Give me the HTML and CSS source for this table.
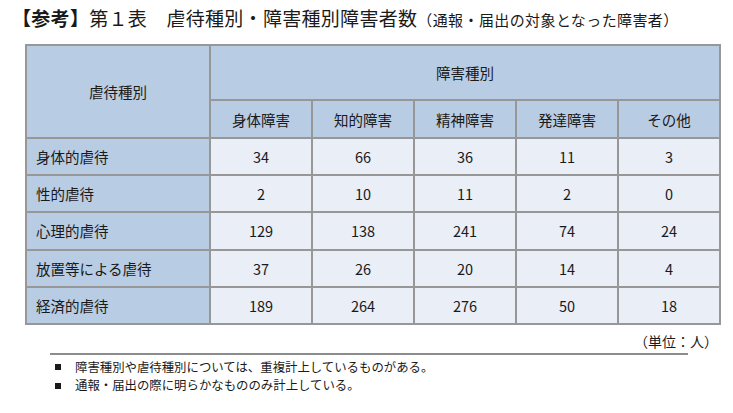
FILE: index.html
```html
<!DOCTYPE html>
<html lang="ja">
<head>
<meta charset="utf-8">
<link rel="stylesheet" href="styles.css">
</head>
<body>
<h1 class="title"><span class="ref">【参考】</span>第１表　虐待種別・障害種別障害者数<span class="sub">（通報・届出の対象となった障害者）</span></h1>
<table class="data">
  <colgroup>
    <col class="c-label">
    <col class="c-num"><col class="c-num"><col class="c-num"><col class="c-num"><col class="c-num">
  </colgroup>
  <thead>
    <tr class="h1">
      <th rowspan="2">虐待種別</th>
      <th colspan="5">障害種別</th>
    </tr>
    <tr class="h2">
      <th>身体障害</th><th>知的障害</th><th>精神障害</th><th>発達障害</th><th>その他</th>
    </tr>
  </thead>
  <tbody>
    <tr><th>身体的虐待</th><td>34</td><td>66</td><td>36</td><td>11</td><td>3</td></tr>
    <tr><th>性的虐待</th><td>2</td><td>10</td><td>11</td><td>2</td><td>0</td></tr>
    <tr><th>心理的虐待</th><td>129</td><td>138</td><td>241</td><td>74</td><td>24</td></tr>
    <tr><th>放置等による虐待</th><td>37</td><td>26</td><td>20</td><td>14</td><td>4</td></tr>
    <tr><th>経済的虐待</th><td>189</td><td>264</td><td>276</td><td>50</td><td>18</td></tr>
  </tbody>
</table>
<div class="unit">（単位：人）</div>
<div class="rule"></div>
<ul class="notes">
  <li>障害種別や虐待種別については、重複計上しているものがある。</li>
  <li>通報・届出の際に明らかなもののみ計上している。</li>
</ul>
</body>
</html>
```

FILE: styles.css
```css
html, body {
  margin: 0;
  padding: 0;
  background: #ffffff;
  color: #1a1a1a;
  font-family: "Noto Sans CJK JP", "Noto Sans", sans-serif;
}
.title {
  box-sizing: border-box;
  height: 44px;
  margin: 0;
  padding: 4px 0 0 12px;
  font-size: 19px;
  line-height: 28px;
  font-weight: normal;
  white-space: nowrap;
  letter-spacing: 0.3px;
}
.title .ref {
  font-weight: bold;
}
.title .sub {
  font-size: 15px;
  letter-spacing: 0.4px;
}
.data {
  margin-left: 25px;
  width: 696px;
  border-collapse: collapse;
  table-layout: fixed;
  font-size: 14.5px;
  border: 2px solid #979797;
}
.c-label { width: 184px; }
.c-num { width: 102px; }
.data th, .data td {
  border: 2px solid #979797;
  padding: 0;
  font-weight: normal;
  text-align: center;
}
.data thead th {
  background: #b8cce4;
}
.data tr.h1 th { height: 53px; }
.data tr.h2 th { height: 36px; }
.data tbody th {
  background: #b8cce4;
  text-align: left;
  padding-left: 9px;
}
.data tbody td {
  background: #e9eef7;
}
.data tbody tr { height: 37.2px; }
.unit {
  width: 718px;
  text-align: right;
  font-size: 14px;
  line-height: 18px;
  margin-top: 7px;
}
.rule {
  margin: 3px 0 0 50px;
  width: 638px;
  border-top: 2px solid #8c8c8c;
}
.notes {
  list-style: none;
  margin: 3px 0 0 0;
  padding: 0 0 0 55px;
  font-size: 12.4px;
  line-height: 18.4px;
}
.notes li {
  display: flex;
  align-items: center;
  gap: 14px;
}
.notes li::before {
  content: "";
  width: 6px;
  height: 6px;
  background: #1a1a1a;
  flex: none;
}
```
